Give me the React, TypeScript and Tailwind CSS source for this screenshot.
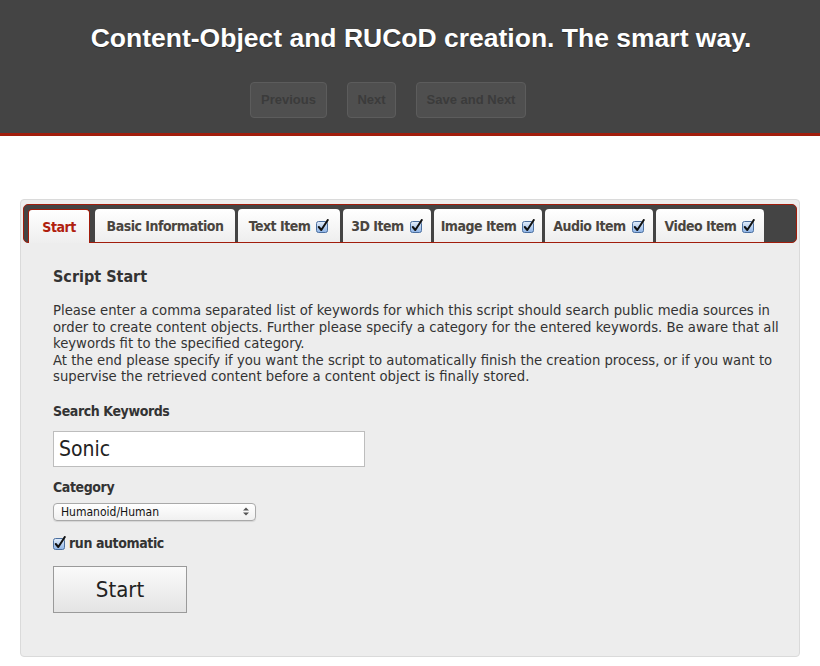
import { useState } from 'react';

const tabs = [
    { label: 'Start', w: 'w-[62px]', checked: false },
    { label: 'Basic Information', w: 'w-[140px]', checked: false },
    { label: 'Text Item', w: 'w-[102px]', checked: true },
    { label: '3D Item', w: 'w-[88px]', checked: true },
    { label: 'Image Item', w: 'w-[108px]', checked: true },
    { label: 'Audio Item', w: 'w-[108px]', checked: true },
    { label: 'Video Item', w: 'w-[108px]', checked: true },
];

const CheckIcon = () => (
    <svg width="13" height="14" viewBox="0 0 13 14" className="shrink-0">
        <defs>
            <linearGradient id="cb" x1="0" y1="0" x2="0" y2="1">
                <stop offset="0" stopColor="#e4eefa" />
                <stop offset="1" stopColor="#8db3e6" />
            </linearGradient>
        </defs>
        <rect x="0.5" y="2.5" width="11" height="11" rx="2" fill="url(#cb)" stroke="#4b6f9f" />
        <path d="M2.8 8 L5.3 11 L11.8 1" fill="none" stroke="#111" strokeWidth="2" strokeLinecap="round" strokeLinejoin="round" />
    </svg>
);

export default function App() {
    const [active] = useState(0);
    const [keywords, setKeywords] = useState('Sonic');

    return (
        <div className="min-h-[666px] bg-white font-['DejaVu_Sans_Condensed','DejaVu_Sans',sans-serif] text-[#333]">
            <header className="h-[136px] bg-[#444] border-b-[3px] border-[#a11d0c] flex flex-col items-center">
                <h1 className="mt-[22px] ml-[22px] text-[26.5px] leading-[32px] font-bold text-white font-['Liberation_Sans',Arial,sans-serif] [text-shadow:0_1px_1px_rgba(0,0,0,0.4)]">
                    Content-Object and RUCoD creation. The smart way.
                </h1>
                <div className="mt-[28px] mr-[44px] flex gap-[20px] font-['Liberation_Sans',Arial,sans-serif]">
                    {['Previous', 'Next', 'Save and Next'].map((b, i) => (
                        <button
                            key={b}
                            disabled
                            className={`h-[36px] rounded-[4px] border border-[#5c5c5c] bg-[#4f4f4f] text-[13px] font-bold text-[#3b3b3b] ${
                                i === 0 ? 'w-[77px]' : i === 1 ? 'w-[49px]' : 'w-[110px]'
                            }`}
                        >
                            {b}
                        </button>
                    ))}
                </div>
            </header>

            <main className="mx-[20px] mt-[63px] h-[458px] rounded-[4px] border border-[#dadada] bg-[#ededed]">
                <div className="mx-[2px] mt-[4px] flex h-[39px] items-end rounded-[5px] border border-[#a11d0c] bg-[#444] pl-[4px]">
                    {tabs.map((t, i) => (
                        <div
                            key={t.label}
                            className={`${t.w} ${i === 0 ? 'mr-[5px]' : 'mr-[3px]'} -mb-px flex h-[34px] items-center justify-center gap-[6px] rounded-t-[4px] bg-gradient-to-b from-white to-[#eeeeee] pt-[1px] text-[14px] tracking-[-0.5px] font-bold ${
                                i === active
                                    ? 'border border-b-0 border-[#a11d0c] text-[#b0200e]'
                                    : 'border-b border-[#a11d0c] text-[#4a4540]'
                            }`}
                        >
                            <span>{t.label}</span>
                            {t.checked && <CheckIcon />}
                        </div>
                    ))}
                </div>

                <section className="px-[32px] pt-[24px]">
                    <h2 className="text-[16px] leading-[20px] font-bold text-[#333]">Script Start</h2>
                    <p className="mt-[15px] text-[14.7px] leading-[16.5px] whitespace-nowrap text-[#333]">
                        Please enter a comma separated list of keywords for which this script should search public media sources in
                        <br />
                        order to create content objects. Further please specify a category for the entered keywords. Be aware that all
                        <br />
                        keywords fit to the specified category.
                        <br />
                        At the end please specify if you want the script to automatically finish the creation process, or if you want to
                        <br />
                        supervise the retrieved content before a content object is finally stored.
                    </p>

                    <label className="mt-[17px] block text-[14px] tracking-[-0.4px] leading-[18px] font-bold">Search Keywords</label>
                    <input
                        value={keywords}
                        onChange={(e) => setKeywords(e.target.value)}
                        className="mt-[11px] block h-[36px] w-[312px] border border-[#bdbdbd] bg-white px-[5px] text-[21px] text-[#222] outline-none"
                    />

                    <label className="mt-[11px] block text-[14px] tracking-[-0.4px] leading-[18px] font-bold">Category</label>
                    <div className="mt-[7px] flex h-[18px] w-[203px] items-center justify-between rounded-[4px] border border-[#a9a9a9] bg-gradient-to-b from-white to-[#f0f0f0] pl-[7px] pr-[6px] text-[12px] text-[#111] shadow-[0_1px_1px_rgba(0,0,0,0.1)]">
                        <span>Humanoid/Human</span>
                        <svg width="6" height="9" viewBox="0 0 6 9">
                            <path d="M0 3.5 L3 0.5 L6 3.5 Z M0 5.5 L3 8.5 L6 5.5 Z" fill="#555" />
                        </svg>
                    </div>

                    <label className="mt-[12px] flex items-center gap-[3px] text-[14px] tracking-[-0.4px] font-bold">
                        <CheckIcon />
                        <span>run automatic</span>
                    </label>

                    <button className="mt-[12px] h-[47px] w-[134px] border border-[#9a9a9a] bg-gradient-to-b from-[#fafafa] to-[#e4e4e4] text-[22px] text-[#222]">
                        Start
                    </button>
                </section>
            </main>
        </div>
    );
}
